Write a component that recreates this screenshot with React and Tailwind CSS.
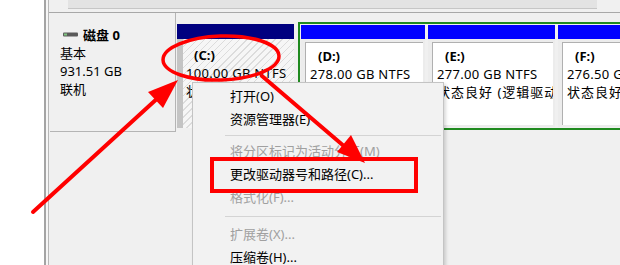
export default function App() {
  const hatch =
    "bg-[repeating-linear-gradient(135deg,#dcdcdc_0px,#dcdcdc_1px,#f6f6f6_1px,#f6f6f6_5px)]";
  return (
    <div className="relative w-[620px] h-[265px] overflow-hidden bg-white flex font-['Noto_Sans','Noto_Sans_CJK_SC',sans-serif] text-[13px] text-black">
      <div className="w-[44px] shrink-0 bg-white" />
      <div className="w-[2px] shrink-0 bg-[#a4a4a4]" />
      <div className="w-[2px] shrink-0 bg-[#f6f6f6]" />
      <div className="w-[1px] shrink-0 bg-[#b8b8b8]" />
      <div className="flex-1 flex flex-col bg-[#f0f0f0]">
        {/* top strip */}
        <div className="h-[13px] shrink-0 pl-[19px] border-b border-[#a8a8a8]">
          <div className="w-[529px] h-[9px] bg-[#e3e3e3] border-b border-[#c6c6c6]" />
        </div>
        {/* disk row */}
        <div className="h-[119px] shrink-0 flex">
          {/* label */}
          <div className="ml-[1px] w-[126px] shrink-0 border-r border-b border-[#b4b4b4] bg-[#f0f0f0] pt-[13px] pl-[10px] leading-[18px]">
            <div className="flex items-center">
              <svg width="16" height="6" viewBox="0 0 16 6" className="ml-[3px] mr-[4px]">
                <rect x="0" y="0.5" width="15" height="4" rx="1" fill="#5a5a5a" />
                <rect x="1" y="1.5" width="3" height="2" fill="#7fc47f" />
              </svg>
              <span className="font-bold">磁盘 0</span>
            </div>
            <div>基本</div>
            <div>931.51 GB</div>
            <div>联机</div>
          </div>
          {/* C: */}
          <div className="ml-[1px] w-[117px] shrink-0 mt-[11px] flex flex-col h-[104px]">
            <div className="h-[15px] bg-[#000080]" />
            <div className="flex-1 flex">
              <div className="w-[6px] bg-[#c4c4c4]" />
              <div className={`flex-1 ${hatch} pt-[7px] pl-[3px] leading-[18px] overflow-hidden whitespace-nowrap`}>
                <div className="pl-[8px] font-bold">(C:)</div>
                <div className="tracking-[0.3px]">100.00 GB NTFS</div>
                <div className="tracking-[1px]">状态良好 (启动, 页面文件, 故障转储, 主分区)</div>
              </div>
            </div>
          </div>
          {/* extended partition frame */}
          <div className="ml-[4px] mt-[9px] h-[108px] flex-1 border-2 border-[#1f8a1f] p-[1px] flex gap-[3px] bg-[#f0f0f0] overflow-hidden">
            {[
              { w: "w-[124px]", l: "(D:)", s: "278.00 GB NTFS" },
              { w: "w-[127px]", l: "(E:)", s: "277.00 GB NTFS" },
              { w: "w-[124px]", l: "(F:)", s: "276.50 GB NTFS" },
            ].map((p) => (
              <div key={p.l} className={`${p.w} shrink-0 flex flex-col`}>
                <div className="h-[14px] bg-[#0000ff]" />
                <div className="flex-1 bg-[#ececec] pl-[4px] pt-[3px] pr-[2px] pb-[2px] flex">
                  <div className="flex-1 bg-white border-l border-t border-[#b0b0b0] pt-[4px] pl-[4px] leading-[18px] overflow-hidden whitespace-nowrap">
                    <div className="pl-[8px] font-bold">{p.l}</div>
                    <div className="tracking-[0.3px]">{p.s}</div>
                    <div className="tracking-[1px]">状态良好 (逻辑驱动器)</div>
                  </div>
                </div>
              </div>
            ))}
          </div>
        </div>
        <div className="flex-1" />
      </div>

      {/* context menu */}
      <div className="absolute left-[192px] top-[82px] w-[252px] h-[200px] bg-[#f2f2f2] border border-[#c4c4c4] shadow-[2px_2px_3px_rgba(0,0,0,0.15)] pt-[2px]">
        <div className="h-[23px] leading-[23px] pl-[37px]">打开(O)</div>
        <div className="h-[23px] leading-[23px] pl-[37px]">资源管理器(E)</div>
        <div className="h-[9px] flex items-center pl-[32px] pr-[2px]">
          <div className="flex-1 h-px bg-[#d4d4d4]" />
        </div>
        <div className="h-[23px] leading-[23px] pl-[37px] text-[#a0a0a0]">将分区标记为活动分区(M)</div>
        <div className="h-[23px] leading-[23px] pl-[37px]">更改驱动器号和路径(C)...</div>
        <div className="h-[23px] leading-[23px] pl-[37px] text-[#a0a0a0]">格式化(F)...</div>
        <div className="h-[14px] flex items-center pl-[32px] pr-[2px]">
          <div className="flex-1 h-px bg-[#d4d4d4]" />
        </div>
        <div className="h-[23px] leading-[23px] pl-[37px] text-[#a0a0a0]">扩展卷(X)...</div>
        <div className="h-[23px] leading-[23px] pl-[37px]">压缩卷(H)...</div>
      </div>

      {/* red annotations */}
      <svg className="absolute left-0 top-0 pointer-events-none" width="620" height="265" viewBox="0 0 620 265">
        <ellipse cx="221" cy="58" rx="58" ry="22" fill="none" stroke="#ff0000" strokeWidth="3.5" transform="rotate(-2 221 58)" />
        <line x1="33" y1="212" x2="160" y2="96" stroke="#ff0000" strokeWidth="4" strokeLinecap="round" />
        <polygon points="178,80 163,108 148,92" fill="#ff0000" />
        <line x1="262" y1="76" x2="345" y2="147" stroke="#ff0000" strokeWidth="4" strokeLinecap="round" />
        <polygon points="365,163 337,152 351,135" fill="#ff0000" />
        <rect x="212" y="159" width="204" height="32" fill="none" stroke="#ff0000" strokeWidth="4" />
      </svg>
    </div>
  );
}
